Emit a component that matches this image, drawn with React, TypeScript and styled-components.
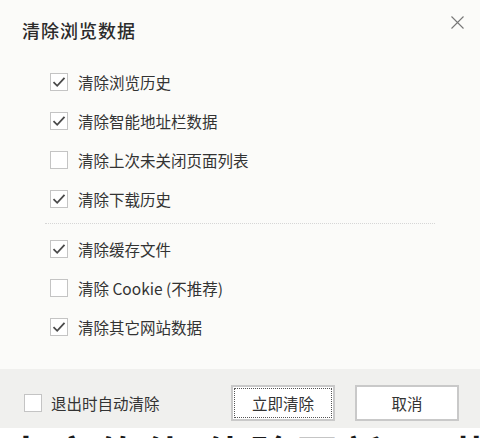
import styled, { createGlobalStyle } from "styled-components";

const GlobalStyle = createGlobalStyle`
    html, body {
        margin: 0;
        padding: 0;
        background: #ffffff;
    }
    body {
        font-family: "Noto Sans CJK SC", "Noto Sans", sans-serif;
        color: #333333;
    }
`;

interface Option {
    label: string,
    checked: boolean,
}

const mainOptions: Option[] = [
    { label: "清除浏览历史", checked: true },
    { label: "清除智能地址栏数据", checked: true },
    { label: "清除上次未关闭页面列表", checked: false },
    { label: "清除下载历史", checked: true },
];

const extraOptions: Option[] = [
    { label: "清除缓存文件", checked: true },
    { label: "清除 Cookie (不推荐)", checked: false },
    { label: "清除其它网站数据", checked: true },
];

const Page = styled.div`
    width: 480px;
    height: 438px;
    display: flex;
    flex-direction: column;
    overflow: hidden;
`;

const Dialog = styled.div`
    height: 428px;
    display: flex;
    flex-direction: column;
    background: #fbfbf9;
`;

const Header = styled.div`
    height: 60px;
    display: flex;
    align-items: center;
    justify-content: space-between;
    padding: 0 16px 0 22px;
    flex-shrink: 0;
`;

const Title = styled.h2`
    margin: 0;
    font-size: 18px;
    font-weight: 500;
    letter-spacing: 1px;
    color: #2b2b2b;
    margin-top: -1px;
`;

const CloseButton = styled.button`
    width: 14px;
    height: 14px;
    padding: 0;
    border: none;
    background: none;
    display: flex;
    align-items: center;
    justify-content: center;
    margin-top: -16px;
`;

const Body = styled.div`
    flex: 1;
    padding: 2px 0 0 50px;
    display: flex;
    flex-direction: column;
`;

const Row = styled.label`
    height: 39px;
    display: flex;
    align-items: center;
    gap: 10px;
    font-size: 15.5px;
    color: #333333;
`;

const Box = styled.span`
    width: 16px;
    height: 16px;
    border: 1px solid #c4c4c4;
    background: #ffffff;
    display: flex;
    align-items: center;
    justify-content: center;
    flex-shrink: 0;
`;

const Divider = styled.hr`
    margin: 5px 45px 5px -5px;
    border: none;
    border-top: 1px dotted #d6d6d6;
`;

const Footer = styled.div`
    height: 59px;
    box-sizing: border-box;
    background: #f0f0ee;
    display: flex;
    align-items: center;
    padding: 9px 21px 0 24px;
    flex-shrink: 0;
`;

const FooterCheck = styled.label`
    display: flex;
    align-items: center;
    gap: 9px;
    font-size: 15.5px;
    color: #333333;
    flex: 1;
`;

const Button = styled.button<{ $focused?: boolean }>`
    width: 104px;
    height: 36px;
    margin-left: 20px;
    background: #ffffff;
    border: 2px solid #c9c9c9;
    font-family: inherit;
    font-size: 15.5px;
    color: #333333;
    position: relative;
    padding: 0;
    &::after {
        content: "";
        position: absolute;
        inset: 1px;
        border: 1px dotted ${p => p.$focused ? "#555555" : "transparent"};
    }
`;

const Backdrop = styled.div`
    height: 10px;
    overflow: hidden;
    background: #ffffff;
    white-space: nowrap;
`;

const BackdropText = styled.div`
    margin-top: 5px;
    margin-left: 6px;
    font-size: 40px;
    font-weight: 700;
    line-height: 40px;
    color: #1a1a1a;
    letter-spacing: 6px;
`;

function Checkbox(props: { checked: boolean }) {
    return (<Box>
        {props.checked && <svg width="14" height="12" viewBox="0 0 14 12">
            <path d="M1.5 6.2 L5.2 9.8 L12.5 1.8" fill="none" stroke="#4a4a4a" strokeWidth="1.8" />
        </svg>}
    </Box>)
}

export default function App() {
    return (<Page>
        <GlobalStyle />
        <Dialog>
            <Header>
                <Title>清除浏览数据</Title>
                <CloseButton aria-label="关闭">
                    <svg width="13" height="13" viewBox="0 0 13 13">
                        <path d="M0.5 0.5 L12.5 12.5 M12.5 0.5 L0.5 12.5" stroke="#777777" strokeWidth="1.1" />
                    </svg>
                </CloseButton>
            </Header>
            <Body>
                {mainOptions.map((o, i) => (<Row key={i}>
                    <Checkbox checked={o.checked} />{o.label}
                </Row>))}
                <Divider />
                {extraOptions.map((o, i) => (<Row key={i}>
                    <Checkbox checked={o.checked} />{o.label}
                </Row>))}
            </Body>
            <Footer>
                <FooterCheck>
                    <Checkbox checked={false} />退出时自动清除
                </FooterCheck>
                <Button $focused>立即清除</Button>
                <Button>取消</Button>
            </Footer>
        </Dialog>
        <Backdrop>
            <BackdropText>中文软件  体验更新  下载中心</BackdropText>
        </Backdrop>
    </Page>)
}
